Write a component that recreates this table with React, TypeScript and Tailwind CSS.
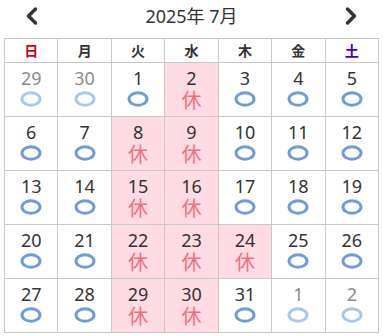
import { ChevronLeft, ChevronRight } from 'lucide-react';

type Day = { n: number; other?: boolean; off?: boolean };

const weekdays = ['日', '月', '火', '水', '木', '金', '土'];

const offDays = [2, 8, 9, 15, 16, 22, 23, 24, 29, 30];

const buildDays = (): Day[] => {
  const days: Day[] = [{ n: 29, other: true }, { n: 30, other: true }];
  for (let i = 1; i <= 31; i++) days.push({ n: i, off: offDays.includes(i) });
  days.push({ n: 1, other: true }, { n: 2, other: true });
  return days;
};

const Circle = ({ light }: { light?: boolean }) => (
  <svg width="22" height="16" viewBox="0 0 22 16" className="mt-[2px]">
    <ellipse cx="11" cy="8" rx="9" ry="6.2" fill="none" stroke={light ? '#a9c6ec' : '#6f9bd9'} strokeWidth="3" />
  </svg>
);

const DayCell = ({ day }: { day: Day }) => (
  <div
    className={`h-[54px] border-r border-b border-[#c8c8c8] flex flex-col items-center pt-[4px] ${
      day.off ? 'bg-[#ffdbe3]' : 'bg-white'
    }`}
  >
    <span className={`text-[18px] leading-[22px] ${day.other ? 'text-[#8a8a8a]' : 'text-[#333]'}`}>{day.n}</span>
    {day.off ? (
      <span className="text-[20px] leading-[24px] text-[#f0707e]">休</span>
    ) : (
      <Circle light={day.other} />
    )}
  </div>
);

export default function App() {
  const days = buildDays();

  return (
    <div className="w-[383px] h-[336px] bg-white font-['Noto_Sans','Noto_Sans_CJK_JP',sans-serif] overflow-hidden">
      <div className="flex items-center justify-between h-[38px] px-[18px] pb-[6px]">
        <ChevronLeft size={28} strokeWidth={3} className="text-[#333]" />
        <span className="text-[18px] text-[#333] leading-none">2025年 7月</span>
        <ChevronRight size={28} strokeWidth={3} className="text-[#333]" />
      </div>

      <div className="ml-[4px] w-[375px] border-l border-t border-[#c8c8c8] grid grid-cols-7">
        {weekdays.map((w, i) => (
          <div
            key={w}
            className={`h-[24px] border-r border-b border-[#c8c8c8] flex items-center justify-center text-[14px] font-bold ${
              i === 0 ? 'text-[#d0021b]' : i === 6 ? 'text-[#3a00c8]' : 'text-[#333]'
            }`}
          >
            {w}
          </div>
        ))}
        {days.map((d, i) => (
          <DayCell key={i} day={d} />
        ))}
      </div>
    </div>
  );
}
